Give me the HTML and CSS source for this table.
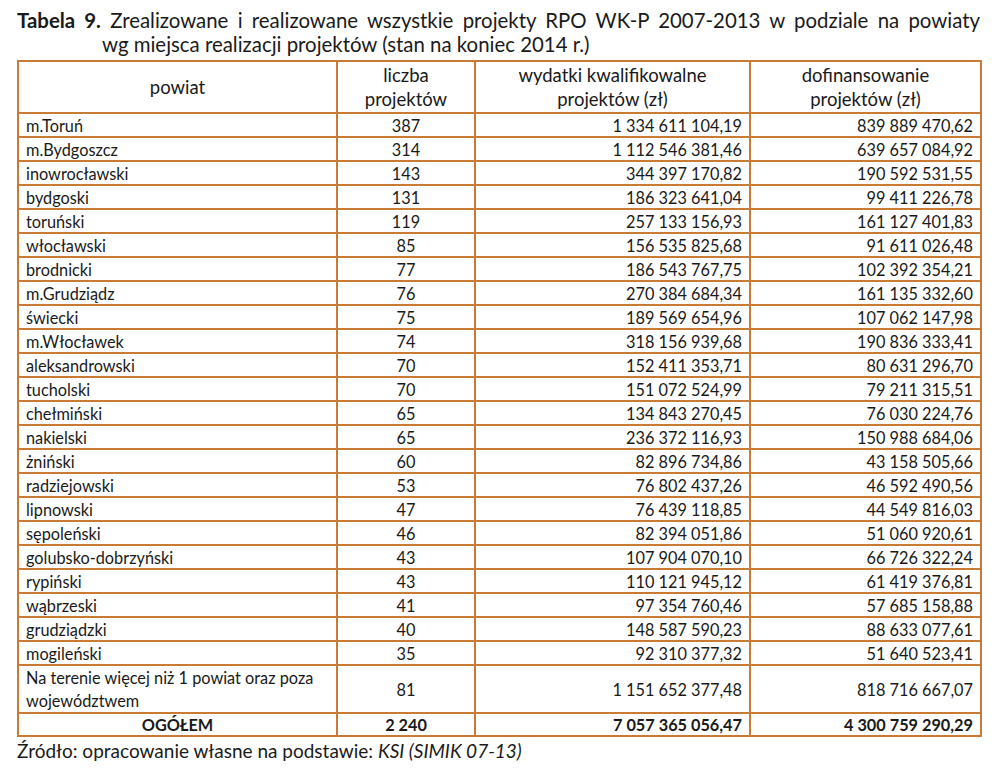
FILE: index.html
```html
<!DOCTYPE html>
<html lang="pl">
<head>
<meta charset="utf-8">
<title>Tabela 9</title>
<link rel="stylesheet" href="styles.css">
</head>
<body>
<div class="page">
  <p class="caption"><span class="cap-line1"><b>Tabela 9.</b> Zrealizowane i realizowane wszystkie projekty RPO WK-P 2007-2013 w podziale na powiaty</span><span class="cap-line2">wg miejsca realizacji projektów (stan na koniec 2014 r.)</span></p>
  <table class="data">
    <colgroup>
      <col class="c1"><col class="c2"><col class="c3"><col class="c4">
    </colgroup>
    <thead>
      <tr><th>powiat</th><th>liczba<br>projektów</th><th>wydatki kwalifikowalne<br>projektów (zł)</th><th>dofinansowanie<br>projektów (zł)</th></tr>
    </thead>
    <tbody>
      <tr><td>m.Toruń</td><td class="n">387</td><td class="r">1 334 611 104,19</td><td class="r">839 889 470,62</td></tr>
      <tr><td>m.Bydgoszcz</td><td class="n">314</td><td class="r">1 112 546 381,46</td><td class="r">639 657 084,92</td></tr>
      <tr><td>inowrocławski</td><td class="n">143</td><td class="r">344 397 170,82</td><td class="r">190 592 531,55</td></tr>
      <tr><td>bydgoski</td><td class="n">131</td><td class="r">186 323 641,04</td><td class="r">99 411 226,78</td></tr>
      <tr><td>toruński</td><td class="n">119</td><td class="r">257 133 156,93</td><td class="r">161 127 401,83</td></tr>
      <tr><td>włocławski</td><td class="n">85</td><td class="r">156 535 825,68</td><td class="r">91 611 026,48</td></tr>
      <tr><td>brodnicki</td><td class="n">77</td><td class="r">186 543 767,75</td><td class="r">102 392 354,21</td></tr>
      <tr><td>m.Grudziądz</td><td class="n">76</td><td class="r">270 384 684,34</td><td class="r">161 135 332,60</td></tr>
      <tr><td>świecki</td><td class="n">75</td><td class="r">189 569 654,96</td><td class="r">107 062 147,98</td></tr>
      <tr><td>m.Włocławek</td><td class="n">74</td><td class="r">318 156 939,68</td><td class="r">190 836 333,41</td></tr>
      <tr><td>aleksandrowski</td><td class="n">70</td><td class="r">152 411 353,71</td><td class="r">80 631 296,70</td></tr>
      <tr><td>tucholski</td><td class="n">70</td><td class="r">151 072 524,99</td><td class="r">79 211 315,51</td></tr>
      <tr><td>chełmiński</td><td class="n">65</td><td class="r">134 843 270,45</td><td class="r">76 030 224,76</td></tr>
      <tr><td>nakielski</td><td class="n">65</td><td class="r">236 372 116,93</td><td class="r">150 988 684,06</td></tr>
      <tr><td>żniński</td><td class="n">60</td><td class="r">82 896 734,86</td><td class="r">43 158 505,66</td></tr>
      <tr><td>radziejowski</td><td class="n">53</td><td class="r">76 802 437,26</td><td class="r">46 592 490,56</td></tr>
      <tr><td>lipnowski</td><td class="n">47</td><td class="r">76 439 118,85</td><td class="r">44 549 816,03</td></tr>
      <tr><td>sępoleński</td><td class="n">46</td><td class="r">82 394 051,86</td><td class="r">51 060 920,61</td></tr>
      <tr><td>golubsko-dobrzyński</td><td class="n">43</td><td class="r">107 904 070,10</td><td class="r">66 726 322,24</td></tr>
      <tr><td>rypiński</td><td class="n">43</td><td class="r">110 121 945,12</td><td class="r">61 419 376,81</td></tr>
      <tr><td>wąbrzeski</td><td class="n">41</td><td class="r">97 354 760,46</td><td class="r">57 685 158,88</td></tr>
      <tr><td>grudziądzki</td><td class="n">40</td><td class="r">148 587 590,23</td><td class="r">88 633 077,61</td></tr>
      <tr><td>mogileński</td><td class="n">35</td><td class="r">92 310 377,32</td><td class="r">51 640 523,41</td></tr>
      <tr class="tall"><td>Na terenie więcej niż 1 powiat oraz poza województwem</td><td class="n">81</td><td class="r">1 151 652 377,48</td><td class="r">818 716 667,07</td></tr>
    </tbody>
    <tfoot>
      <tr><td class="n">OGÓŁEM</td><td class="n">2 240</td><td class="r">7 057 365 056,47</td><td class="r">4 300 759 290,29</td></tr>
    </tfoot>
  </table>
  <p class="source">Źródło: opracowanie własne na podstawie: <i>KSI (SIMIK 07-13)</i></p>
</div>
</body>
</html>
```

FILE: styles.css
```css
html, body {
  margin: 0;
  padding: 0;
  background: #ffffff;
}

body {
  font-family: Lato, "Noto Sans", sans-serif;
  color: #1a1a1a;
}

.page {
  width: 963px;
  padding: 8px 0 0 17px;
}

.caption {
  margin: 0;
  font-size: 20.4px;
  line-height: 24px;
}

.cap-line1 {
  display: block;
  text-align: justify;
  text-align-last: justify;
}

.cap-line2 {
  display: block;
  padding-left: 85px;
}

.data {
  border-collapse: collapse;
  table-layout: fixed;
  width: 963px;
  font-size: 16.3px;
  margin-top: 4px;
}

.c1 { width: 319px; }
.c2 { width: 138px; }
.c3 { width: 275px; }
.c4 { width: 231px; }

.data th,
.data td {
  border: 2px solid #c97b35;
  padding: 0 7px;
  height: 22px;
  line-height: 21px;
  vertical-align: middle;
}

.data th {
  font-weight: normal;
  font-size: 18.5px;
  text-align: center;
  height: 50px;
  line-height: 24px;
}

.data td.n { text-align: center; }
.data td.r { text-align: right; }

.data tr.tall td {
  height: 45px;
  line-height: 23px;
}

.data tfoot td {
  font-weight: bold;
  height: 21px;
}

.source {
  margin: 3px 0 0;
  font-size: 19px;
  line-height: 22px;
}
```
